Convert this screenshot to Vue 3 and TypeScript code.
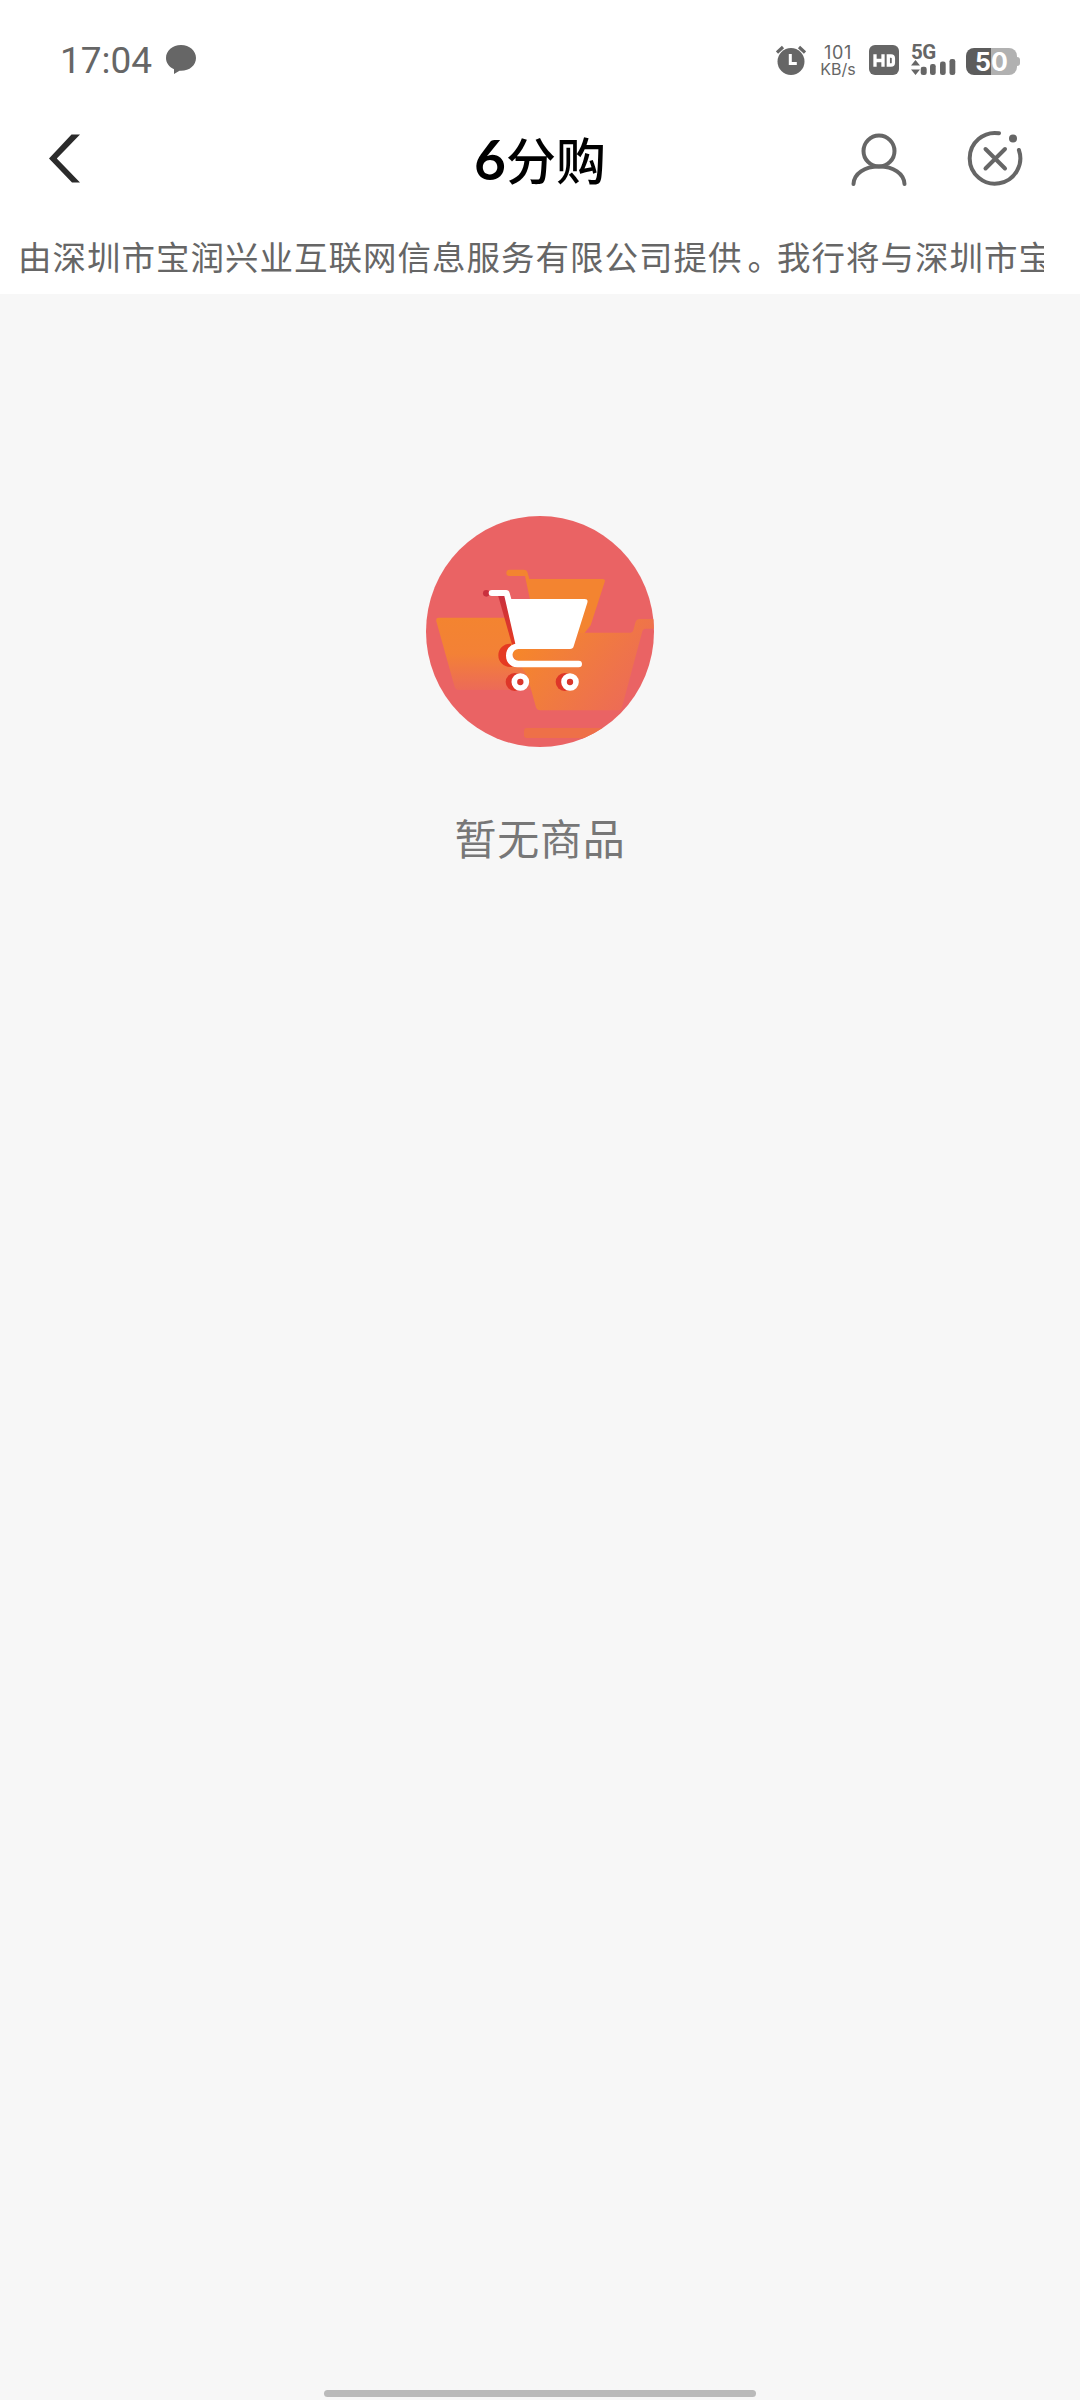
<script setup lang="ts">
const time = '17:04'
const title = '6分购'
const noticeLead = '由深圳市宝润兴业互联网信息服务有限公司提供'
const noticeRest = '我行将与深圳市宝'
const emptyText = '暂无商品'
</script>

<template>
  <div class="page">
    <header class="top">
      <div class="status">
        <span class="time">{{ time }}</span>
        <svg class="bubble" width="32" height="30" viewBox="0 0 32 30">
          <path d="M16 0C7.500 0 1 5.700 1 13c0 4.800 3 9 8 11.300V29l5.500-3.200C24 26.500 31 20.500 31 13 31 5.700 24.500 0 16 0z" fill="#666" />
        </svg>
        <div class="spacer"></div>
        <svg class="alarm" width="30" height="30" viewBox="0 0 30 30">
          <circle cx="15" cy="16.500" r="13.500" fill="#666" />
          <path d="M1 7.500 7 2M29 7.500 23 2" stroke="#666" stroke-width="3.200" />
          <path d="M14.300 9v9.500h6.500" fill="none" stroke="#fff" stroke-width="3" />
        </svg>
        <div class="speed"><span class="rate">101</span><span class="unit">KB/s</span></div>
        <svg class="hd" width="30" height="30" viewBox="0 0 30 30">
          <rect width="30" height="30" rx="6" fill="#666" />
          <path d="M6 9.300v12.400M14 9.300v12.400M6 15.500h8M19.300 11h2.700c1.600 0 2.400.8 2.400 2.300v4.400c0 1.500-.8 2.300-2.400 2.300h-2.700z" fill="none" stroke="#fff" stroke-width="3.300" />
        </svg>
        <div class="signal">
          <span class="net">5G</span>
          <svg width="46" height="30" viewBox="0 0 46 30">
            <path d="M4.500 15 9 20.500H0zM4.500 30 9 24.500H0z" fill="#666" />
            <g fill="#666">
              <rect x="9.700" y="21.700" width="6" height="8.300" rx="2.300" />
              <rect x="19" y="19" width="5.700" height="11" rx="2.300" />
              <rect x="29" y="16.500" width="5.700" height="13.500" rx="2.300" />
              <rect x="38.500" y="14" width="5.800" height="16" rx="2.300" />
            </g>
          </svg>
        </div>
        <div class="battery">
          <div class="cell"><span>5</span><span>0</span></div>
          <div class="nub"></div>
        </div>
      </div>

      <nav class="nav">
        <svg class="back" width="32" height="50" viewBox="0 0 32 50">
          <path d="M22.500 0.500H31L7.800 24.500 31 48.500H23L0 24.500z" fill="#2b2b2b" />
        </svg>
        <h1 class="title"><span class="six">{{ title[0] }}</span>{{ title.slice(1) }}</h1>
        <svg class="user" width="56" height="54" viewBox="0 0 56 54" fill="none" stroke="#666" stroke-width="4">
          <circle cx="28" cy="18" r="15.500" />
          <path d="M2.500 51C3 40.500 13.500 33.500 28 33.500S53 40.500 53.500 51" stroke-linecap="round" />
        </svg>
        <svg class="close" width="56" height="56" viewBox="0 0 56 56" fill="none" stroke="#666" stroke-width="4" stroke-linecap="round">
          <path d="M32 3.300A25.300 25.300 0 1 0 51.900 20" />
          <path d="M18.500 19 38 38.500M38 19 18.500 38.500" />
          <circle cx="46" cy="8.500" r="4" fill="#666" stroke="none" />
        </svg>
      </nav>

      <div class="notice">{{ noticeLead }}<span class="stop">。</span>{{ noticeRest }}</div>
    </header>

    <main class="empty">
      <svg width="228" height="231" viewBox="48 48 684 693">
        <defs>
          <clipPath id="disc"><ellipse cx="390" cy="394.500" rx="342" ry="346.500" /></clipPath>
          <linearGradient id="fadeLeft" x1="0" y1="0" x2="0" y2="1">
            <stop offset="0" stop-color="#f38430" />
            <stop offset=".5" stop-color="#f38136" />
            <stop offset="1" stop-color="#ec6a58" />
          </linearGradient>
          <linearGradient id="fadeRight" x1="0" y1="0" x2="1" y2=".5">
            <stop offset="0" stop-color="#f98b20" />
            <stop offset=".5" stop-color="#f17d3c" />
            <stop offset="1" stop-color="#ed6c55" />
          </linearGradient>
          <linearGradient id="shade" x1="0" y1="0" x2="0" y2="1">
            <stop offset="0" stop-color="#c9303e" />
            <stop offset="1" stop-color="#e53a22" />
          </linearGradient>
        </defs>
        <g clip-path="url(#disc)">
          <rect x="48" y="48" width="684" height="693" fill="#ea6364" />
          <path d="M298 209h43q10 0 12 10l5 18h220q9 0 6 9l-42 130-32 40H385l-40-188H298q-9 0-9-9t9-10z" fill="#f38430" />
          <path d="M86 353h230l80 217H144q-7 0-10-9L79 364q-2-11 7-11z" fill="url(#fadeLeft)" />
          <path d="M300 448 340 398H662q6 0 8-7l6-23q3-11 13-11h50v29h-33q-7 0-9 8l-61 228q-2 9-11 9H390q-9 0-12-9l-26-94z" fill="url(#fadeRight)" />
          <path d="M350 684h230v30H350q-8 0-8-8v-14q0-8 8-8z" fill="#ee7048" />
          <circle cx="229" cy="280" r="10" fill="#c9303e" />
          <path d="M264 286h30l32 148h-20z" fill="url(#shade)" />
          <path d="M304 431h-4a34 34 0 0 0 0 70h8q-14-14-14-35z" fill="#e53a22" />
          <circle cx="314" cy="546" r="27" fill="#de3628" />
          <circle cx="464" cy="546" r="27" fill="#de3628" />
          <path d="M246 270h42q9 0 11 9l5 18h220q11 0 8 11l-41 131q-2 8-11 8H325a16.500 16.500 0 0 0 0 35h181q10 0 10 10t-10 10H322c-20 0-34-15-34-35 0-18 12-33 28-36l-33-143h-37q-10 0-10-9t10-9z" fill="#fff" />
          <circle cx="331" cy="546" r="18" fill="#d9362b" stroke="#fff" stroke-width="17" />
          <circle cx="480" cy="546" r="18" fill="#d9362b" stroke="#fff" stroke-width="17" />
        </g>
      </svg>
      <p>{{ emptyText }}</p>
    </main>

    <footer class="home"><div class="handle"></div></footer>
  </div>
</template>

<style>
body { margin: 0; background: #f7f7f7; }
</style>

<style scoped>
.page {
  display: flex;
  flex-direction: column;
  width: 1080px;
  height: 2400px;
  background: #f7f7f7;
  font-family: "Noto Sans CJK SC", sans-serif;
  overflow: hidden;
}
.top { height: 294px; background: #fff; }
.status {
  display: flex;
  align-items: center;
  height: 120px;
  padding: 0 60px 0 60px;
  box-sizing: border-box;
  color: #666;
}
.time { padding-top: 2px; font: 400 37px/44px Roboto, sans-serif; }
.bubble { margin: 0 0 0 13px; }
.spacer { flex: 1; }
.speed {
  display: flex;
  flex-direction: column;
  align-items: center;
  width: 36px;
  margin: 0 13px 0 14px;
  padding-top: 1px;
  font: 400 16px/17px Inter, sans-serif;
}
.rate { font-size: 18px; letter-spacing: 0.6px; }
.unit { font-size: 16px; }
.signal { position: relative; width: 46px; height: 30px; margin: 0 9px 0 12px; }
.net {
  position: absolute;
  left: 0;
  top: -4px;
  font: 700 20.500px/22px Roboto, sans-serif;
  letter-spacing: -0.500px;
}
.signal svg { display: block; }
.battery { display: flex; align-items: center; padding-top: 2px; }
.cell {
  display: flex;
  justify-content: center;
  width: 51px;
  height: 27px;
  border-radius: 8px;
  background: linear-gradient(90deg, #5c5c5c 50%, #b1b1b1 50%);
  color: #fff;
  font: 700 25px/28px Inter, sans-serif;
}
.nub { width: 3px; height: 9px; border-radius: 0 3px 3px 0; background: #b1b1b1; }
.nav { display: flex; height: 100px; align-items: flex-start; }
.back { margin: 14px 0 0 49px; }
.title {
  display: flex;
  align-items: baseline;
  margin: 3px 0 0 393px;
  width: 134px;
  white-space: nowrap;
  font-size: 50px;
  line-height: 70px;
  font-weight: 500;
  color: #000;
}
.six { font-family: Lato, sans-serif; font-size: 55px; font-weight: 700; line-height: 60px; }
.user { margin: 13px 0 0 243px; }
.close { margin: 10px 0 0 60px; }
.notice {
  margin: 10px 36px 0 18px;
  height: 54px;
  overflow: hidden;
  white-space: nowrap;
  font-size: 33.500px;
  letter-spacing: 1px;
  line-height: 52px;
  color: #666;
}
.stop { margin: 0 -5px 0 5px; }
.empty { display: flex; flex: 1; flex-direction: column; align-items: center; padding-top: 222px; }
.empty p { margin: 58px 0 0; font-size: 42px; letter-spacing: 0.8px; line-height: 64px; color: #777; }
.home { display: flex; justify-content: center; height: 10px; }
.handle { width: 432px; height: 7px; border-radius: 4px; background: #bababa; }
</style>
